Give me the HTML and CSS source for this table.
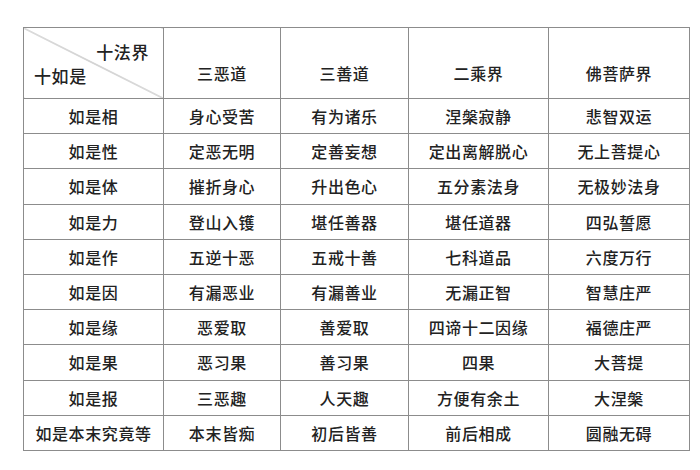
FILE: index.html
```html
<!DOCTYPE html>
<html lang="zh">
<head>
<meta charset="utf-8">
<title>十如是 十法界</title>
<link rel="stylesheet" href="styles.css">
</head>
<body>
<div class="page">
<table class="grid">
<colgroup>
<col class="c1"><col class="c2"><col class="c3"><col class="c4"><col class="c5">
</colgroup>
<thead>
<tr class="head">
<th class="corner"><div class="corner-in"><span class="top">十法界</span><span class="bot">十如是</span></div></th>
<th>三恶道</th><th>三善道</th><th>二乘界</th><th>佛菩萨界</th>
</tr>
</thead>
<tbody>
<tr><td>如是相</td><td>身心受苦</td><td>有为诸乐</td><td>涅槃寂静</td><td>悲智双运</td></tr>
<tr><td>如是性</td><td>定恶无明</td><td>定善妄想</td><td>定出离解脱心</td><td>无上菩提心</td></tr>
<tr><td>如是体</td><td>摧折身心</td><td>升出色心</td><td>五分素法身</td><td>无极妙法身</td></tr>
<tr><td>如是力</td><td>登山入镬</td><td>堪任善器</td><td>堪任道器</td><td>四弘誓愿</td></tr>
<tr><td>如是作</td><td>五逆十恶</td><td>五戒十善</td><td>七科道品</td><td>六度万行</td></tr>
<tr><td>如是因</td><td>有漏恶业</td><td>有漏善业</td><td>无漏正智</td><td>智慧庄严</td></tr>
<tr><td>如是缘</td><td>恶爱取</td><td>善爱取</td><td>四谛十二因缘</td><td>福德庄严</td></tr>
<tr><td>如是果</td><td>恶习果</td><td>善习果</td><td>四果</td><td>大菩提</td></tr>
<tr><td>如是报</td><td>三恶趣</td><td>人天趣</td><td>方便有余土</td><td>大涅槃</td></tr>
<tr><td>如是本末究竟等</td><td>本末皆痴</td><td>初后皆善</td><td>前后相成</td><td>圆融无碍</td></tr>
</tbody>
</table>
</div>
</body>
</html>
```

FILE: styles.css
```css
html, body {
  margin: 0;
  padding: 0;
  background: #ffffff;
}
.page {
  padding: 27px 0 0 23px;
  font-family: "Noto Sans CJK SC", "Noto Sans", sans-serif;
  color: #222222;
}
.grid {
  border-collapse: collapse;
  table-layout: fixed;
  width: 666px;
}
.c1 { width: 140px; }
.c2 { width: 117px; }
.c3 { width: 128px; }
.c4 { width: 140px; }
.c5 { width: 141px; }
.grid th, .grid td {
  border: 1px solid #8c8c8c;
  text-align: center;
  font-size: 16px;
  font-weight: 500;
  letter-spacing: 0.6px;
  padding: 0;
  line-height: 1;
}
.grid tbody tr {
  height: 35.2px;
}
.head {
  height: 70px;
}
.head th {
  vertical-align: top;
  padding-top: 37px;
}
.grid th.corner {
  padding: 0;
  vertical-align: top;
  background: linear-gradient(to top right, transparent calc(50% - 0.7px), #9a9a9a 50%, transparent calc(50% + 0.7px));
}
.corner-in {
  display: flex;
  flex-direction: column;
  height: 70px;
  box-sizing: border-box;
  padding: 15px 14px 0 10px;
  font-size: 17px;
}
.corner-in .top {
  align-self: flex-end;
}
.corner-in .bot {
  align-self: flex-start;
  margin-top: 7px;
}
```
